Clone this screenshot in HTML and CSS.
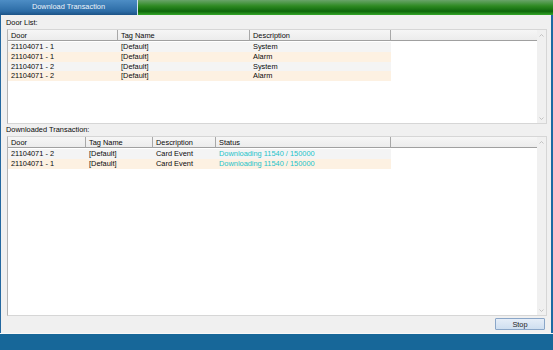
FILE: index.html
```html
<!DOCTYPE html>
<html lang="en">
<head>
    <meta charset="UTF-8">
    <title>Download Transaction</title>
    <link rel="stylesheet" href="styles.css">
</head>
<body>
    <div class="window">
        <div class="titlebar">
            <div class="tab">Download Transaction</div>
            <div class="titlebar-fill"></div>
        </div>

        <div class="main">
            <div class="label">Door List:</div>

            <!-- door list -->
            <div class="listbox door-box">
                <div class="list-main">
                    <div class="list-head">
                        <div class="hcell w-door">Door</div>
                        <div class="hcell w-tag">Tag Name</div>
                        <div class="hcell w-desc">Description</div>
                        <div class="hcell h-fill"></div>
                    </div>
                    <div class="row"><div class="cell w-door">21104071 - 1</div><div class="cell w-tag">[Default]</div><div class="cell w-desc">System</div></div>
                    <div class="row alt"><div class="cell w-door">21104071 - 1</div><div class="cell w-tag">[Default]</div><div class="cell w-desc">Alarm</div></div>
                    <div class="row"><div class="cell w-door">21104071 - 2</div><div class="cell w-tag">[Default]</div><div class="cell w-desc">System</div></div>
                    <div class="row alt"><div class="cell w-door">21104071 - 2</div><div class="cell w-tag">[Default]</div><div class="cell w-desc">Alarm</div></div>
                </div>
                <div class="scroll">
                    <svg width="5" height="3" viewBox="0 0 5 3"><path d="M0.5 2.5 L2.5 0.5 L4.5 2.5" fill="none" stroke="#b8b8b8" stroke-width="0.8"/></svg>
                    <svg width="5" height="3" viewBox="0 0 5 3"><path d="M0.5 0.5 L2.5 2.5 L4.5 0.5" fill="none" stroke="#b8b8b8" stroke-width="0.8"/></svg>
                </div>
            </div>

            <div class="label">Downloaded Transaction:</div>

            <!-- downloaded transactions -->
            <div class="listbox trans-box">
                <div class="list-main">
                    <div class="list-head">
                        <div class="hcell t-door">Door</div>
                        <div class="hcell t-tag">Tag Name</div>
                        <div class="hcell t-desc">Description</div>
                        <div class="hcell t-status">Status</div>
                        <div class="hcell h-fill"></div>
                    </div>
                    <div class="row"><div class="cell t-door">21104071 - 2</div><div class="cell t-tag">[Default]</div><div class="cell t-desc">Card Event</div><div class="cell t-status status">Downloading 11540 / 150000</div></div>
                    <div class="row alt"><div class="cell t-door">21104071 - 1</div><div class="cell t-tag">[Default]</div><div class="cell t-desc">Card Event</div><div class="cell t-status status">Downloading 11540 / 150000</div></div>
                </div>
                <div class="scroll">
                    <svg width="5" height="3" viewBox="0 0 5 3"><path d="M0.5 2.5 L2.5 0.5 L4.5 2.5" fill="none" stroke="#b8b8b8" stroke-width="0.8"/></svg>
                    <svg width="5" height="3" viewBox="0 0 5 3"><path d="M0.5 0.5 L2.5 2.5 L4.5 0.5" fill="none" stroke="#b8b8b8" stroke-width="0.8"/></svg>
                </div>
            </div>

            <div class="footer">
                <button class="stop-btn">Stop</button>
            </div>
        </div>

        <div class="bottombar"></div>
    </div>
</body>
</html>
```

FILE: styles.css
```css
html, body {
    margin: 0;
    height: 350px;
    overflow: hidden;
}
body {
    font-family: "Liberation Sans", Arial, sans-serif;
    font-size: 7.4px;
    color: #0a0a0a;
    background-color: #f0f0f0;
}
.window {
    display: flex;
    flex-direction: column;
    height: 350px;
}
.titlebar {
    display: flex;
    height: 15px;
}
.tab {
    width: 137px;
    line-height: 14px;
    text-align: center;
    color: #eef4fa;
    background: linear-gradient(#4d8dc5, #2c6ca6 75%, #1b5386);
    border-right: 1px solid #d4e3ef;
}
.titlebar-fill {
    flex: 1;
    background: linear-gradient(#69a469 0%, #2e8a22 40%, #0e680b 75%, #35a729 100%);
}
.main {
    height: 318px;
    display: flex;
    flex-direction: column;
    padding: 2px 2px 0 5px;
    border-left: 1px solid #2468a0;
    border-right: 2px solid #1f6aa2;
    box-sizing: border-box;
}
.label {
    line-height: 12px;
    height: 12px;
}
.listbox {
    display: flex;
    margin: 0 2px 0 1px;
    border: 1px solid #d6d6d6;
    border-left-color: #b4b4b4;
    background: white;
    box-sizing: border-box;
}
.door-box {
    height: 95px;
}
.trans-box {
    flex: 1;
}
.list-main {
    flex: 1;
}
.scroll {
    width: 9px;
    background: #f0f0f0;
    display: flex;
    flex-direction: column;
    justify-content: space-between;
    align-items: center;
    padding: 4px 0 3px;
}
.scroll svg {
    display: block;
}
.list-head {
    display: flex;
    height: 12px;
}
.hcell {
    height: 11px;
    line-height: 11px;
    padding-left: 3px;
    box-sizing: border-box;
    background: linear-gradient(#f6f6f6, #ececec);
    border-right: 1px solid #a8a8a8;
    border-bottom: 1px solid #a0a0a0;
    white-space: nowrap;
}
.h-fill {
    flex: 1;
    border-right: none;
}
.row {
    display: flex;
    height: 9.75px;
    line-height: 9.75px;
}
.cell {
    padding-left: 3px;
    box-sizing: border-box;
    background: #f4f4f4;
    white-space: nowrap;
    overflow: hidden;
}
.row.alt .cell {
    background: #fdf1e2;
}
.w-door { width: 110px; }
.w-tag { width: 132px; }
.w-desc { width: 141px; }
.t-door { width: 78px; }
.t-tag { width: 67px; }
.t-desc { width: 63px; }
.t-status { width: 175px; }
.status {
    color: #1ec3c9;
}
.footer {
    height: 17px;
    display: flex;
    justify-content: flex-end;
    align-items: flex-start;
    padding: 2px 4px 0 0;
    box-sizing: border-box;
}
.stop-btn {
    width: 50px;
    height: 12px;
    padding: 0;
    font-family: "Liberation Sans", Arial, sans-serif;
    font-size: 7.4px;
    color: #222;
    background: linear-gradient(#e6eef8, #cfdff0);
    border: 1px solid #8aa6c8;
    border-radius: 1px;
}
.bottombar {
    flex: 1;
    background: #176799;
    border-top: 1px solid #f8f8f8;
}
```
